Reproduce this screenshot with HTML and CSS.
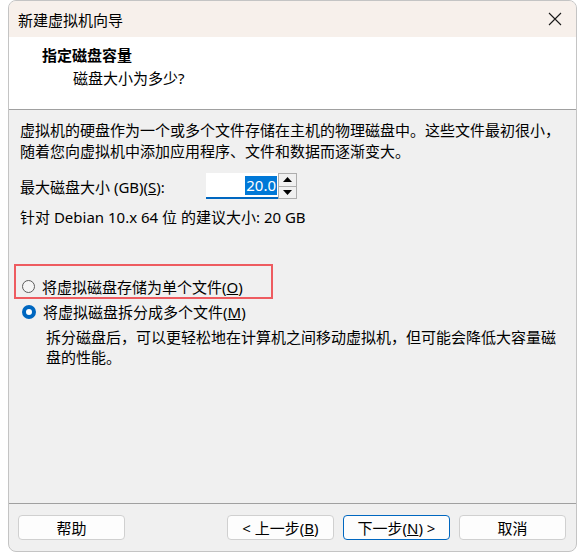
FILE: index.html
```html
<!DOCTYPE html>
<html lang="zh-CN">
<head>
    <meta charset="UTF-8">
    <title>新建虚拟机向导</title>
    <link rel="stylesheet" href="styles.css">
</head>
<body>

    <div class="window">
        <!-- Title bar -->
        <div class="titlebar">
            <span class="title">新建虚拟机向导</span>
            <svg class="close" width="14" height="14" viewBox="0 0 14 14">
                <path d="M1 1 L13 13 M13 1 L1 13" stroke="#1a1a1a" stroke-width="1.1" fill="none"/>
            </svg>
        </div>

        <!-- Page header -->
        <div class="header">
            <h1>指定磁盘容量</h1>
            <p>磁盘大小为多少?</p>
        </div>

        <!-- Page body -->
        <div class="body">
            <p class="intro">虚拟机的硬盘作为一个或多个文件存储在主机的物理磁盘中。这些文件最初很小，<br>随着您向虚拟机中添加应用程序、文件和数据而逐渐变大。</p>

            <div class="size-row">
                <label>最大磁盘大小 (GB)(<u>S</u>):</label>
                <div class="spin">
                    <div class="spin-input"><span class="sel">20.0</span></div>
                    <div class="spin-buttons">
                        <div class="spin-btn">
                            <svg width="9" height="5" viewBox="0 0 9 5"><path d="M0 5 L4.5 0 L9 5 Z" fill="#000"/></svg>
                        </div>
                        <div class="spin-btn">
                            <svg width="9" height="5" viewBox="0 0 9 5"><path d="M0 0 L4.5 5 L9 0 Z" fill="#000"/></svg>
                        </div>
                    </div>
                </div>
            </div>

            <p class="hint">针对 Debian 10.x 64 位 的建议大小: 20 GB</p>

            <div class="options">
                <div class="radio-row">
                    <span class="radio"></span>
                    <span>将虚拟磁盘存储为单个文件(<u>O</u>)</span>
                </div>
                <div class="radio-row">
                    <span class="radio checked"></span>
                    <span>将虚拟磁盘拆分成多个文件(<u>M</u>)</span>
                </div>
                <p class="desc">拆分磁盘后，可以更轻松地在计算机之间移动虚拟机，但可能会降低大容量磁<br>盘的性能。</p>

                <!-- annotation box -->
                <div class="highlight"></div>
            </div>
        </div>

        <!-- Buttons -->
        <div class="footer">
            <button class="btn">帮助</button>
            <div class="spacer"></div>
            <button class="btn">&lt; 上一步(<u>B</u>)</button>
            <button class="btn primary">下一步(<u>N</u>) &gt;</button>
            <button class="btn">取消</button>
        </div>
    </div>

</body>
</html>
```

FILE: styles.css
```css
body {
    margin: 0;
    padding: 0;
    background: #ffffff;
    font-family: "Noto Sans", "Noto Sans CJK SC", sans-serif;
    font-size: 15px;
    color: #000;
}

.window {
    margin-left: 8px;
    width: 567px;
    height: 550px;
    border: 1px solid #c4c4c4;
    border-radius: 8px;
    overflow: hidden;
    display: flex;
    flex-direction: column;
    background: #f0f0f0;
}

/* Title bar */
.titlebar {
    height: 36px;
    background: #f7f0eb;
    display: flex;
    align-items: center;
    justify-content: space-between;
    padding: 0 14px 0 9px;
    flex-shrink: 0;
}

.title {
    font-size: 15px;
}

.close {
    display: block;
}

/* Header */
.header {
    background: #ffffff;
    border-bottom: 1px solid #a0a0a0;
    padding: 8px 0 0 33px;
    box-sizing: border-box;
    height: 73px;
    flex-shrink: 0;
}

.header h1 {
    margin: 0;
    font-size: 15px;
    font-weight: bold;
    line-height: 21px;
}

.header p {
    margin: 2px 0 0 31px;
    line-height: 21px;
}

/* Body */
.body {
    flex: 1;
    padding: 10px 0 0 11px;
}

.intro {
    margin: 0;
    line-height: 21px;
}

.size-row {
    display: flex;
    align-items: center;
    margin-top: 11px;
    height: 26px;
}

.size-row label {
    width: 186px;
}

.spin {
    display: flex;
    height: 26px;
}

.spin-input {
    width: 72px;
    background: #ffffff;
    border-bottom: 2px solid #0067c0;
    box-sizing: border-box;
    display: flex;
    justify-content: flex-end;
    align-items: center;
    padding-right: 1px;
}

.sel {
    background: #0078d7;
    color: #ffffff;
    line-height: 19px;
    padding: 0 1px;
}

.spin-buttons {
    width: 19px;
    border: 1px solid #adadad;
    box-sizing: border-box;
    display: flex;
    flex-direction: column;
    background: #f0f0f0;
}

.spin-btn {
    flex: 1;
    display: flex;
    align-items: center;
    justify-content: center;
}

.spin-btn + .spin-btn {
    border-top: 1px solid #adadad;
}

.hint {
    margin: 8px 0 0;
    line-height: 21px;
}

/* Radio options */
.options {
    position: relative;
    margin-top: 46px;
}

.radio-row {
    display: flex;
    align-items: center;
    height: 25px;
}

.radio {
    width: 13px;
    height: 13px;
    border: 1px solid #5c5c5c;
    border-radius: 50%;
    box-sizing: border-box;
    margin: 0 7px 0 2px;
    background: #f5f5f5;
}

.radio.checked {
    border: 4px solid #0067c0;
    background: #ffffff;
    width: 14px;
    height: 14px;
}

.desc {
    margin: 3px 0 0 26px;
    line-height: 20px;
}

.highlight {
    position: absolute;
    left: -6px;
    top: -10px;
    width: 259px;
    height: 35px;
    border: 2px solid #ee5b60;
    box-sizing: border-box;
}

/* Footer buttons */
.footer {
    height: 48px;
    border-top: 1px solid #a0a0a0;
    display: flex;
    align-items: flex-start;
    gap: 9px;
    padding: 11px 10px 0 9px;
    box-sizing: border-box;
    flex-shrink: 0;
}

.spacer {
    flex: 1;
}

.btn {
    width: 107px;
    height: 25px;
    background: #fdfdfd;
    border: 1px solid #d0d0d0;
    border-radius: 4px;
    font-family: "Noto Sans", "Noto Sans CJK SC", sans-serif;
    font-size: 15px;
    padding: 0;
    color: #000;
}

.btn.primary {
    border-color: #0067c0;
}
```
